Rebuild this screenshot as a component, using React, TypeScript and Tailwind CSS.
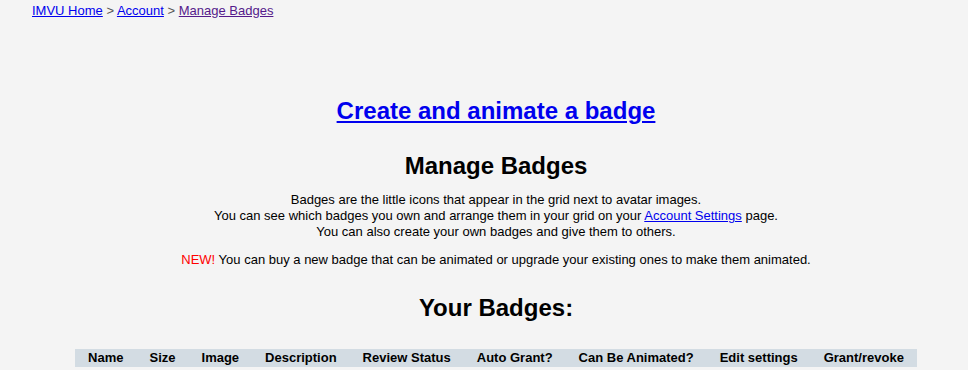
export default function App() {
    const columns = [
        'Name',
        'Size',
        'Image',
        'Description',
        'Review Status',
        'Auto Grant?',
        'Can Be Animated?',
        'Edit settings',
        'Grant/revoke',
    ];

    return (
        <div className="min-h-screen bg-[#f4f4f4] text-black text-[13px] leading-4 font-['Liberation_Sans',Arial,sans-serif]">
            {/* Breadcrumb */}
            <div className="pt-[3px] pl-8">
                <a href="#" className="text-[#0000ee] underline">IMVU Home</a>
                <span className="text-[#555]"> &gt; </span>
                <a href="#" className="text-[#0000ee] underline">Account</a>
                <span className="text-[#555]"> &gt; </span>
                <a href="#" className="text-[#551a8b] underline">Manage Badges</a>
            </div>

            <div className="pl-8 pr-2 flex flex-col items-center text-center">
                <a href="#" className="mt-[78px] text-[24px] leading-7 font-bold text-[#0000ee] underline">
                    Create and animate a badge
                </a>

                <h1 className="mt-[27px] text-[24px] leading-7 font-bold">Manage Badges</h1>

                <p className="mt-3">
                    Badges are the little icons that appear in the grid next to avatar images.
                    <br />
                    You can see which badges you own and arrange them in your grid on your{' '}
                    <a href="#" className="text-[#0000ee] underline">Account Settings</a> page.
                    <br />
                    You can also create your own badges and give them to others.
                </p>

                <p className="mt-3">
                    <span className="text-[#ff0000]">NEW!</span> You can buy a new badge that can be animated or upgrade your existing ones to make them animated.
                </p>

                <h2 className="mt-[26px] text-[24px] leading-7 font-bold">Your Badges:</h2>

                <table className="mt-[27px] border-separate border-spacing-0">
                    <thead>
                        <tr className="bg-[#d3dce3]">
                            {columns.map((c) => (
                                <th key={c} className="px-[13px] py-px font-bold whitespace-nowrap">
                                    {c}
                                </th>
                            ))}
                        </tr>
                    </thead>
                    <tbody>
                        <tr>
                            <td colSpan={9} className="py-px text-center">
                                (You haven't created any badges yet.)
                            </td>
                        </tr>
                    </tbody>
                </table>
            </div>
        </div>
    );
}
